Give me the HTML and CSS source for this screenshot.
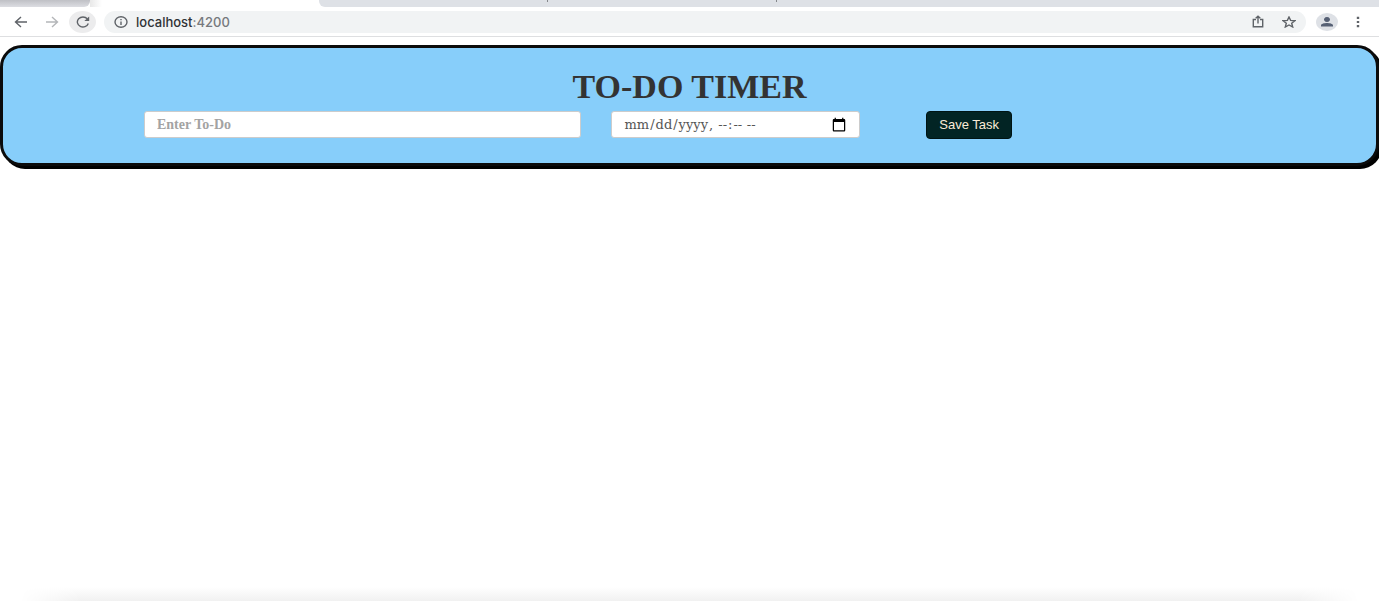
FILE: index.html
```html
<!DOCTYPE html>
<html lang="en">
<head>
<meta charset="utf-8">
<title>To-Do Timer</title>
<link rel="stylesheet" href="styles.css">
</head>
<body>
<div class="window">
  <div class="tabs">
    <div class="tab tab-left"></div>
    <div class="tab-active"></div>
    <div class="tab tab-right"><span class="divider"></span><span class="divider"></span></div>
  </div>
  <div class="toolbar">
    <nav class="nav">
      <button class="icon-button" aria-label="Back"><svg width="14" height="12" viewBox="0 0 14 12"><path d="M13 6H2M7 1L1.500 6L7 11"/></svg></button>
      <button class="icon-button faded" aria-label="Forward"><svg width="14" height="12" viewBox="0 0 14 12"><path d="M1 6H12M7 1L12.500 6L7 11"/></svg></button>
      <button class="icon-button reload" aria-label="Reload"><svg width="14" height="12" viewBox="0 0 14 12"><path d="M12.300 7.500A5.600 5 0 1 1 11.300 2.800"/><path class="solid" d="M13.200 .5V5H8.300Z"/></svg></button>
    </nav>
    <div class="address">
      <svg width="14" height="12" viewBox="0 0 14 12"><ellipse cx="7" cy="6" rx="6" ry="5.200"/><path d="M7 5.400V9M7 3V4.200"/></svg>
      <span class="url">localhost<span class="port">:4200</span></span>
      <button class="icon-button share" aria-label="Share"><svg width="12" height="13" viewBox="0 0 12 13"><path d="M4 4.500H1.300V11.700H10.700V4.500H8M6 8.500V1.300M3.700 3.300L6 1.200L8.300 3.300"/></svg></button>
      <button class="icon-button" aria-label="Bookmark"><svg width="14" height="12" viewBox="0 0 14 12"><path d="M7 1L8.600 4.400L13 4.700L9.700 7.200L10.700 11L7 9L3.300 11L4.300 7.200L1 4.700L5.400 4.400Z"/></svg></button>
    </div>
    <button class="icon-button avatar" aria-label="Profile"><svg width="14" height="12" viewBox="0 0 14 12"><path class="solid" d="M7 1A3 2.500 0 1 1 6.990 1ZM1 10.500V9.300C1 7.600 4.500 6.900 7 6.900S13 7.600 13 9.300V10.500Z"/></svg></button>
    <button class="icon-button" aria-label="Menu"><svg width="4" height="12" viewBox="0 0 4 12"><path class="solid" d="M.8 .8H3.200V3H.8ZM.8 4.900H3.200V7.100H.8ZM.8 9H3.200V11.200H.8Z"/></svg></button>
  </div>
  <main class="page">
    <section class="panel">
      <h1 class="title">TO-DO TIMER</h1>
      <form class="task-form">
        <input class="field" type="text" placeholder="Enter To-Do" aria-label="Enter To-Do">
        <input class="field date" type="datetime-local" aria-label="Due date and time">
        <button class="save" type="button">Save Task</button>
      </form>
    </section>
  </main>
  <div class="bottom-shade"></div>
</div>
</body>
</html>
```
FILE: styles.css
```css
* { box-sizing: border-box; }
body { margin: 0; background: #fff; }
.window {
  display: flex;
  flex-direction: column;
  height: 100vh;
  padding: 0 5px 4px 0;
  overflow: hidden;
}
.tabs { display: flex; height: 7px; }
.tab { background: #dee1e6; }
.tab-left { width: 90px; border-bottom-right-radius: 6px; background: linear-gradient(#bfc0c5, #dcdde2); }
.tab-active { width: 229px; background: linear-gradient(90deg, #e8e8e8, #fff 12px); }
.tab-right { flex: 1; display: flex; gap: 228px; padding-left: 228px; border-bottom-left-radius: 6px; }
.divider { width: 1px; height: 2px; background: #85878b; }
.toolbar {
  display: flex;
  align-items: center;
  height: 30px;
  padding: 0 8px 0 7px;
  border-bottom: 1px solid #dedfe1;
}
.nav { display: flex; gap: 4px; margin-right: 8px; }
.icon-button {
  display: flex;
  align-items: center;
  justify-content: center;
  width: 27px;
  height: 22px;
  padding: 0;
  border: 0;
  border-radius: 50%;
  background: none;
}
svg { flex: none; fill: none; stroke: #5f6368; stroke-width: 1.4; }
.solid { fill: #5f6368; stroke: none; }
.faded svg { stroke: #b4b6b9; }
.reload { background: #ececed; }
.address {
  flex: 1;
  display: flex;
  align-items: center;
  gap: 8px;
  height: 22px;
  margin-right: 10px;
  padding: 0 4px 0 10px;
  border-radius: 11px;
  background: #f1f3f4;
}
.url { font: 500 13px/22px Inter, sans-serif; color: #303236; }
.port { color: #76797d; }
.share { margin-left: auto; margin-right: -4px; }
.avatar { width: 22px; height: 18px; margin-right: 6px; background: #dee1e6; }
.avatar .solid { fill: #566074; }
.page { flex: 1; padding-top: 8px; overflow: hidden; }
.panel {
  padding: 21px 0 24px;
  border: 3px solid #0b0b0b;
  border-radius: 22px;
  background: #87cefa;
  box-shadow: 3px 3px 0 #000;
}
.title {
  margin: 0 0 6px;
  font: bold 34px/36px "Liberation Serif", serif;
  text-align: center;
  color: #333;
}
.task-form {
  display: grid;
  grid-template-columns: 437fr 250fr auto;
  column-gap: 30px;
  margin: 0 364px 0 141px;
}
.field {
  width: 100%;
  min-width: 0;
  height: 27px;
  padding: 0 12px;
  border: 1px solid #ccc;
  border-radius: 3px;
  background: #fff;
  font: bold 14px/25px "Liberation Serif", serif;
  color: #555;
}
.field::placeholder { color: #a3a3a3; }
.date { font: 13px/25px "DejaVu Serif", serif; }
.date::-webkit-calendar-picker-indicator { width: 16px; height: 15px; padding: 0; }
.save {
  height: 28px;
  margin-left: 36px;
  padding: 0 12px;
  border: 1px solid #001414;
  border-radius: 4px;
  background: #022424;
  font: 13px/26px "Liberation Sans", sans-serif;
  color: #faebd7;
  white-space: nowrap;
}
.bottom-shade {
  height: 14px;
  margin: 0 20px;
  background: linear-gradient(#fff, #f1f1f1);
  mask-image: linear-gradient(90deg, transparent, #000 60px, #000 calc(100% - 60px), transparent);
}
```
